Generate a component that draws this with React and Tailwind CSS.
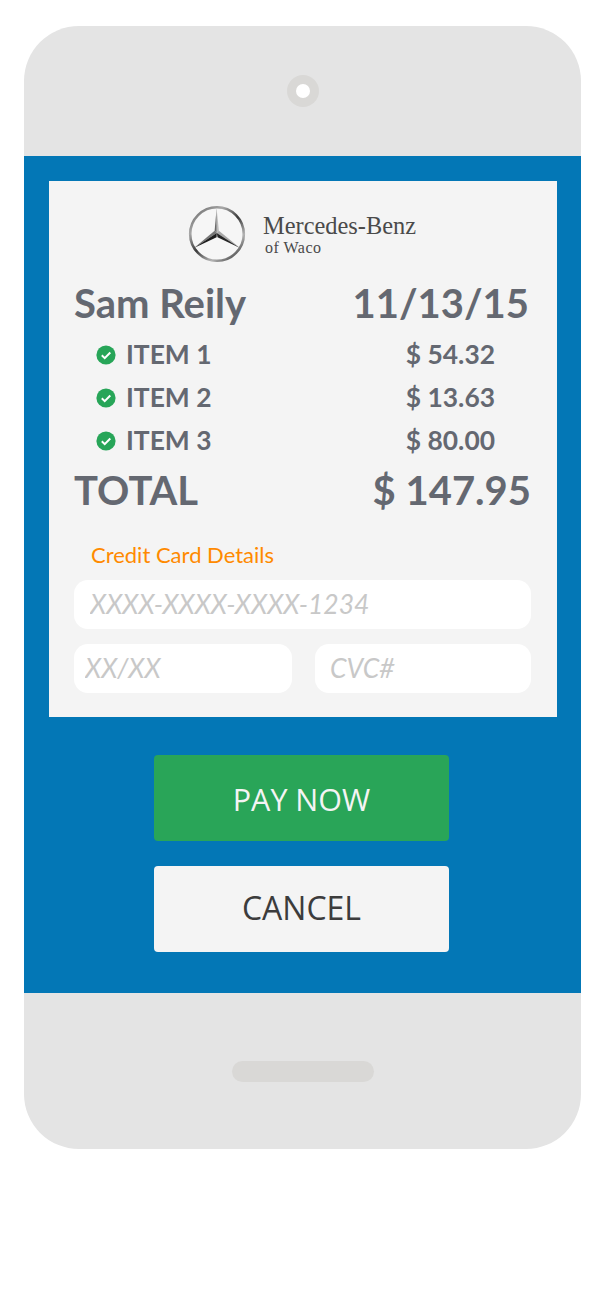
import React from 'react';

const items = [
  { name: 'ITEM 1', price: '$ 54.32' },
  { name: 'ITEM 2', price: '$ 13.63' },
  { name: 'ITEM 3', price: '$ 80.00' },
];

const CheckBadge = () => (
  <svg width="20" height="20" viewBox="0 0 20 20" className="shrink-0">
    <circle cx="10" cy="10" r="9.6" fill="#27a558" />
    <path d="M5.8 10.3l2.9 2.8 5.6-5.6" fill="none" stroke="#fff" strokeWidth="2" />
  </svg>
);

const StarLogo = () => (
  <svg width="58" height="58" viewBox="0 0 58 58" className="shrink-0">
    <defs>
      <linearGradient id="ring" x1="0" y1="0" x2="0.8" y2="1">
        <stop offset="0" stopColor="#5f5f5f" />
        <stop offset="0.3" stopColor="#a8a8a8" />
        <stop offset="0.55" stopColor="#3a3a3a" />
        <stop offset="0.8" stopColor="#b4b4b4" />
        <stop offset="1" stopColor="#4a4a4a" />
      </linearGradient>
    </defs>
    <circle cx="29" cy="29" r="26.8" fill="#f6f6f6" stroke="url(#ring)" strokeWidth="2.6" />
    <path d="M28.6 3.5L26.6 25.8 28.8 28Z" fill="#6a6a6a" />
    <path d="M28.6 3.5L28.8 28 30.9 25.8Z" fill="#bcbcbc" />
    <path d="M28.8 28L30.9 25.8 52 43Z" fill="#a8a8a8" />
    <path d="M28.8 28L52 43 29.5 32.2Z" fill="#262626" />
    <path d="M28.8 28L26.6 25.8 6 43Z" fill="#767676" />
    <path d="M28.8 28L6 43 28.6 32.2Z" fill="#1e1e1e" />
  </svg>
);

const inputClass =
  'block w-full h-[49px] rounded-[14px] bg-white text-[26.5px] italic text-[#c8c8c8] placeholder:text-[#c8c8c8] outline-none pb-[2px]';

export default function App() {
  return (
    <div className="w-[600px] h-[1305px] bg-white pt-[26px] pl-[24px] font-['Lato',sans-serif]">
      <div className="w-[557px] h-[1123px] rounded-[55px] overflow-hidden bg-[#e4e4e4] flex flex-col">
        <div className="h-[130px] flex items-center justify-center pb-[1px] pl-[1px] shrink-0">
          <div className="w-[32px] h-[32px] rounded-full bg-[#d9d8d6] flex items-center justify-center">
            <div className="w-[14px] h-[14px] rounded-full bg-white" />
          </div>
        </div>

        <div className="h-[837px] bg-[#0377b6] shrink-0 px-[25px] pt-[25px]">
          <div className="w-[508px] h-[536px] bg-[#f4f4f4] pt-[24px] px-[25px]">
            <div className="flex items-center h-[58px] pl-[115px] -ml-[1px]">
              <StarLogo />
              <div className="ml-[17px] font-['Liberation_Serif',serif] text-[#4a4a4a]">
                <div className="text-[24.4px] leading-[26px] mt-[1px]">Mercedes-Benz</div>
                <div className="text-[16px] leading-[18px] ml-[2px] tracking-[0.5px]">of Waco</div>
              </div>
            </div>

            <div className="flex justify-between items-center h-[40px] mt-[20px] text-[#646871] font-bold text-[40px] leading-none">
              <span>Sam Reily</span>
              <span className="mr-[3px]">11/13/15</span>
            </div>

            <div className="mt-[10px]">
              {items.map((item) => (
                <div key={item.name} className="flex items-center h-[43px] pl-[22px] text-[#646871] font-bold text-[26.4px]">
                  <CheckBadge />
                  <span className="ml-[10px]">{item.name}</span>
                  <span className="ml-auto mr-[37px]">{item.price}</span>
                </div>
              ))}
            </div>

            <div className="flex justify-between items-center h-[46px] mt-[5px] text-[#646871] font-bold text-[40px] leading-none">
              <span>TOTAL</span>
              <span className="mr-[1px]">$ 147.95</span>
            </div>

            <div className="text-[#ff8a00] text-[22px] leading-[28px] mt-[28px] ml-[17px]">Credit Card Details</div>

            <div className="mt-[11px] w-[457px]">
              <input className={`${inputClass} pl-[16px]`} placeholder="XXXX-XXXX-XXXX-1234" readOnly />
              <div className="flex justify-between mt-[15px]">
                <input className={`${inputClass} !w-[218px] pl-[11px]`} placeholder="XX/XX" readOnly />
                <input className={`${inputClass} !w-[216px] pl-[15px]`} placeholder="CVC#" readOnly />
              </div>
            </div>
          </div>

          <div className="flex flex-col items-center mt-[38px] pr-[2px] font-['Open_Sans',sans-serif]">
            <button className="w-[295px] h-[86px] rounded-[4px] bg-[#29a558] text-[#f4f4f4] text-[30.5px] pt-[3px]">PAY NOW</button>
            <button className="w-[295px] h-[86px] rounded-[4px] bg-[#f4f4f4] text-[#3c3c3c] text-[32px] mt-[25px] pb-[3px]">CANCEL</button>
          </div>
        </div>

        <div className="flex-1 flex items-center justify-center pl-[1px]">
          <div className="w-[142px] h-[21px] rounded-full bg-[#d9d8d6]" />
        </div>
      </div>
    </div>
  );
}
